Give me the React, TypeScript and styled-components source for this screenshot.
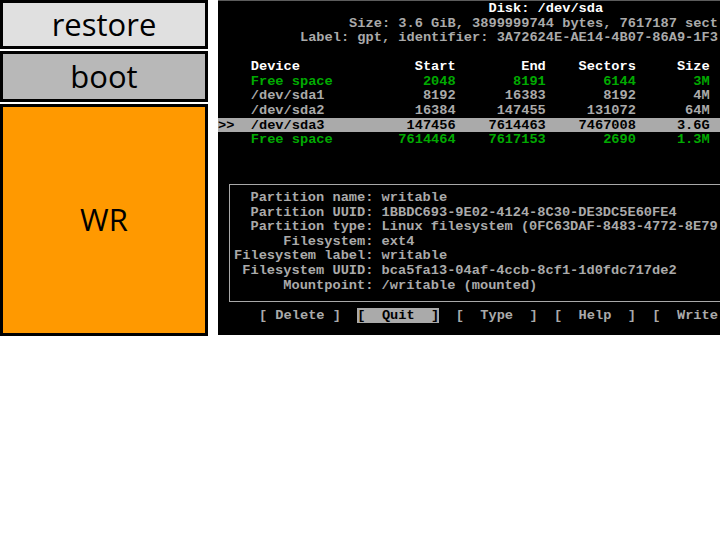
import React from "react";
import styled, { createGlobalStyle } from "styled-components";

const LH = 14.57;

const Global = createGlobalStyle`
  html, body { margin: 0; padding: 0; background: #ffffff; }
  #root { width: 720px; height: 540px; }
`;

const Page = styled.div`
  display: flex;
  gap: 10px;
  align-items: flex-start;
  width: 720px;
`;

const Side = styled.div`
  display: flex;
  flex-direction: column;
  gap: 2px;
  width: 208px;
`;

const Tile = styled.div<{ $bg: string; $h: number }>`
  box-sizing: border-box;
  height: ${(p) => p.$h}px;
  border: 3px solid #000;
  background: ${(p) => p.$bg};
  display: flex;
  align-items: center;
  justify-content: center;
  font-family: "Open Sans", "DejaVu Sans", sans-serif;
  font-size: 31px;
  color: #000;
  padding-bottom: 2px;
`;

const Terminal = styled.div`
  box-sizing: border-box;
  width: 502px;
  height: 335px;
  padding-top: 1px;
  background: #000;
  overflow: hidden;
  box-shadow: inset 0 1px 0 #5c5c5c;
  font-family: "Liberation Mono", "DejaVu Sans Mono", monospace;
  font-weight: bold;
  font-size: 13.67px;
`;

const Line = styled.div<{ $c?: string; $sel?: boolean }>`
  height: ${LH}px;
  line-height: 16px;
  white-space: pre;
  color: ${(p) => (p.$sel ? "#000" : p.$c || "#aaaaaa")};
  background: ${(p) => (p.$sel ? "#aaaaaa" : "transparent")};
`;

const InfoBox = styled.div`
  margin: 8px 0 6px 11px;
  width: 700px;
  border: 1px solid #a8a8a8;
  padding: 5.4px 0 8.6px 4.1px;
`;

const Btn = styled.span<{ $sel?: boolean }>`
  color: ${(p) => (p.$sel ? "#000" : "#aaaaaa")};
  background: ${(p) => (p.$sel ? "#aaaaaa" : "transparent")};
`;

type Cell = [number, string, "l" | "r"];
const at = (cells: Cell[]) => {
  let s = "";
  for (const [col, text, a] of cells) {
    const start = a === "l" ? col : col - text.length;
    s = s.padEnd(start) + text;
  }
  return s;
};

const GREEN = "#00aa00";
const WHITE = "#ffffff";

const rows: { dev: string; start: string; end: string; sec: string; size: string; c: string; sel?: boolean }[] = [
  { dev: "Free space", start: "2048", end: "8191", sec: "6144", size: "3M", c: GREEN },
  { dev: "/dev/sda1", start: "8192", end: "16383", sec: "8192", size: "4M", c: "#aaaaaa" },
  { dev: "/dev/sda2", start: "16384", end: "147455", sec: "131072", size: "64M", c: "#aaaaaa" },
  { dev: "/dev/sda3", start: "147456", end: "7614463", sec: "7467008", size: "3.6G", c: "#000", sel: true },
  { dev: "Free space", start: "7614464", end: "7617153", sec: "2690", size: "1.3M", c: GREEN },
];

const info: [string, string][] = [
  ["Partition name:", "writable"],
  ["Partition UUID:", "1BBDC693-9E02-4124-8C30-DE3DC5E60FE4"],
  ["Partition type:", "Linux filesystem (0FC63DAF-8483-4772-8E79"],
  ["Filesystem:", "ext4"],
  ["Filesystem label:", "writable"],
  ["Filesystem UUID:", "bca5fa13-04af-4ccb-8cf1-1d0fdc717de2"],
  ["Mountpoint:", "/writable (mounted)"],
];

export default function App() {
  return (
    <>
      <Global />
      <Page>
        <Side>
          <Tile $bg="#e0e0e0" $h={49}>restore</Tile>
          <Tile $bg="#b8b8b8" $h={51}>boot</Tile>
          <Tile $bg="#ff9900" $h={232}>WR</Tile>
        </Side>
        <Terminal>
          <Line $c={WHITE}>{at([[33, "Disk: /dev/sda", "l"]])}</Line>
          <Line>{at([[16, "Size: 3.6 GiB, 3899999744 bytes, 7617187 sect", "l"]])}</Line>
          <Line>{at([[10, "Label: gpt, identifier: 3A72624E-AE14-4B07-86A9-1F3", "l"]])}</Line>
          <Line> </Line>
          <Line $c={WHITE}>
            {at([
              [4, "Device", "l"],
              [29, "Start", "r"],
              [40, "End", "r"],
              [51, "Sectors", "r"],
              [60, "Size", "r"],
            ])}
          </Line>
          {rows.map((r, i) => (
            <Line key={i} $c={r.c} $sel={r.sel}>
              {at([
                [0, r.sel ? ">>" : "", "l"],
                [4, r.dev, "l"],
                [29, r.start, "r"],
                [40, r.end, "r"],
                [51, r.sec, "r"],
                [60, r.size, "r"],
              ])}
            </Line>
          ))}
          <Line> </Line>
          <Line> </Line>
          <InfoBox>
            {info.map(([k, v], i) => (
              <Line key={i}>{at([[17, k, "r"], [18, v, "l"]])}</Line>
            ))}
          </InfoBox>
          <Line>
            {"     "}
            <Btn>[ Delete ]</Btn>
            {"  "}
            <Btn $sel>[  Quit  ]</Btn>
            {"  "}
            <Btn>[  Type  ]</Btn>
            {"  "}
            <Btn>[  Help  ]</Btn>
            {"  "}
            <Btn>[  Write</Btn>
          </Line>
        </Terminal>
      </Page>
    </>
  );
}
